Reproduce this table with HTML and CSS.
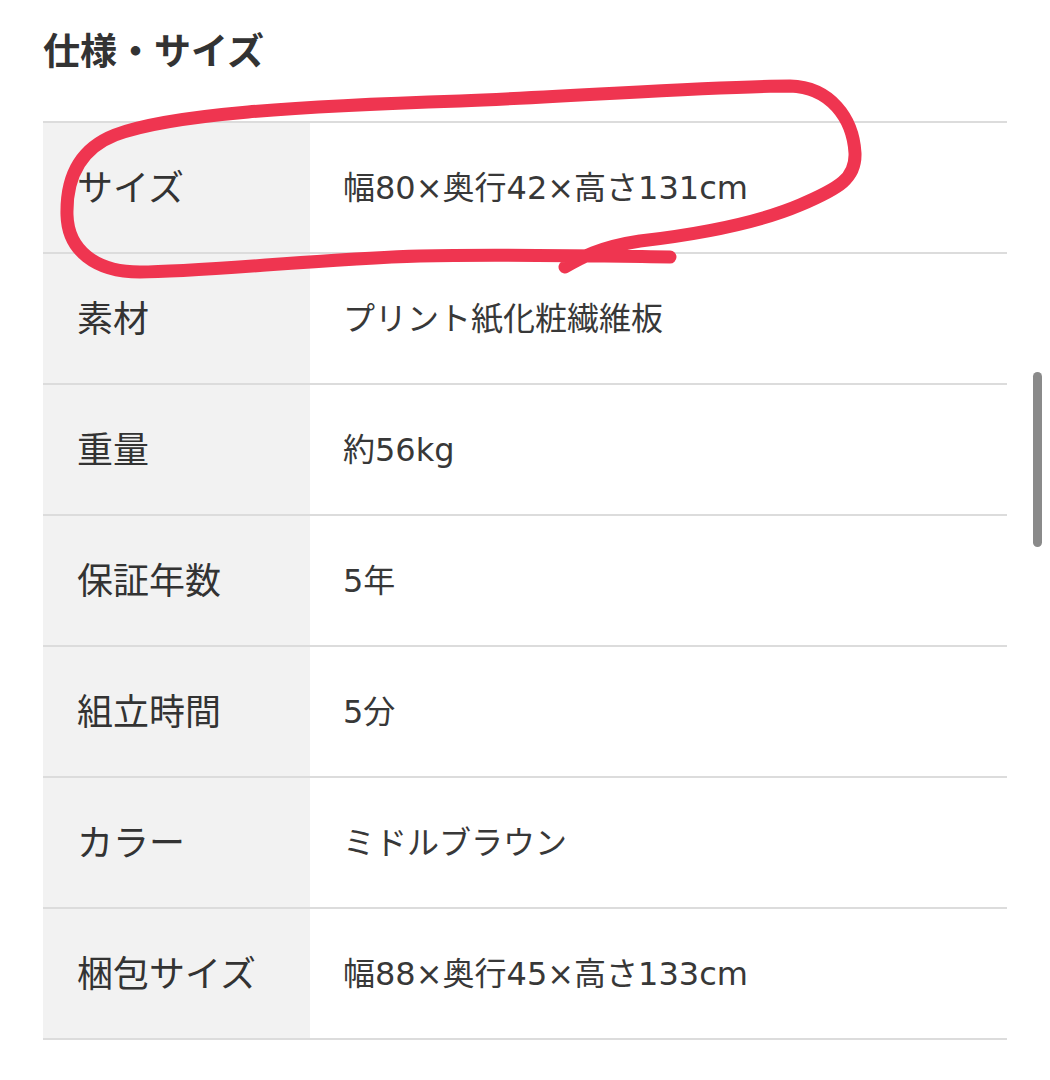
FILE: index.html
```html
<!DOCTYPE html>
<html lang="ja">
<head>
  <meta charset="UTF-8" />
  <meta name="viewport" content="width=device-width, initial-scale=1.0" />
  <title>仕様・サイズ</title>
  <link rel="stylesheet" href="styles.css">
</head>
<body>
  <div class="page">
    <h2 class="spec-title">仕様・サイズ</h2>

    <table class="spec">
      <tr><th>サイズ</th><td>幅80×奥行42×高さ131cm</td></tr>
      <tr><th>素材</th><td>プリント紙化粧繊維板</td></tr>
      <tr><th>重量</th><td>約56kg</td></tr>
      <tr><th>保証年数</th><td>5年</td></tr>
      <tr><th>組立時間</th><td>5分</td></tr>
      <tr><th>カラー</th><td>ミドルブラウン</td></tr>
      <tr><th>梱包サイズ</th><td>幅88×奥行45×高さ133cm</td></tr>
    </table>

    <!-- hand drawn marker over the first row -->
    <svg class="scribble" width="1050" height="300" viewBox="0 0 1050 300">
      <path d="M670 257 C 600 256, 500 254, 420 256 C 320 259, 200 272, 140 272 C 95 272, 68 250, 67 215 C 66 175, 82 148, 115 135 C 170 114, 300 106, 460 101 C 600 95, 720 86, 790 86 C 830 87, 853 118, 855 153 C 856 178, 840 188, 800 205 C 760 222, 700 234, 640 241 C 600 247, 580 258, 565 267"
        fill="none" stroke="#ef3550" stroke-width="13" stroke-linecap="round" stroke-linejoin="round" />
    </svg>

    <div class="scroll-thumb"></div>
  </div>
</body>
</html>
```

FILE: styles.css
```css
body {
  margin: 0;
  background: #fff;
  color: #333;
  font-family: "Noto Sans CJK JP", "Noto Sans", sans-serif;
}
.page {
  position: relative;
  height: 1080px;
  padding: 0 43px;
  overflow: hidden;
}
.spec-title {
  margin: 27px 0 50px;
  font-size: 37px;
  line-height: 44px;
  font-weight: 700;
}
.spec {
  width: 964px;
  border-collapse: collapse;
  border-top: 2px solid #dcdcdc;
}
.spec tr {
  height: 131px;
  border-bottom: 2px solid #dcdcdc;
}
.spec th, .spec td {
  padding: 0 0 5px;
  vertical-align: middle;
  text-align: left;
}
.spec th {
  width: 233px;
  padding-left: 34px;
  background: #f2f2f2;
  font-size: 36px;
  font-weight: 400;
}
.spec td {
  padding-left: 33px;
  font-family: "DejaVu Sans", "Noto Sans CJK JP", sans-serif;
  font-size: 32px;
  font-weight: 400;
  color: #383838;
}
.scribble {
  position: absolute;
  top: 0;
  left: 0;
  pointer-events: none;
}
.scroll-thumb {
  position: absolute;
  top: 372px;
  left: 1033px;
  width: 9px;
  height: 175px;
  border-radius: 5px;
  background: #8a8a8a;
}
```
